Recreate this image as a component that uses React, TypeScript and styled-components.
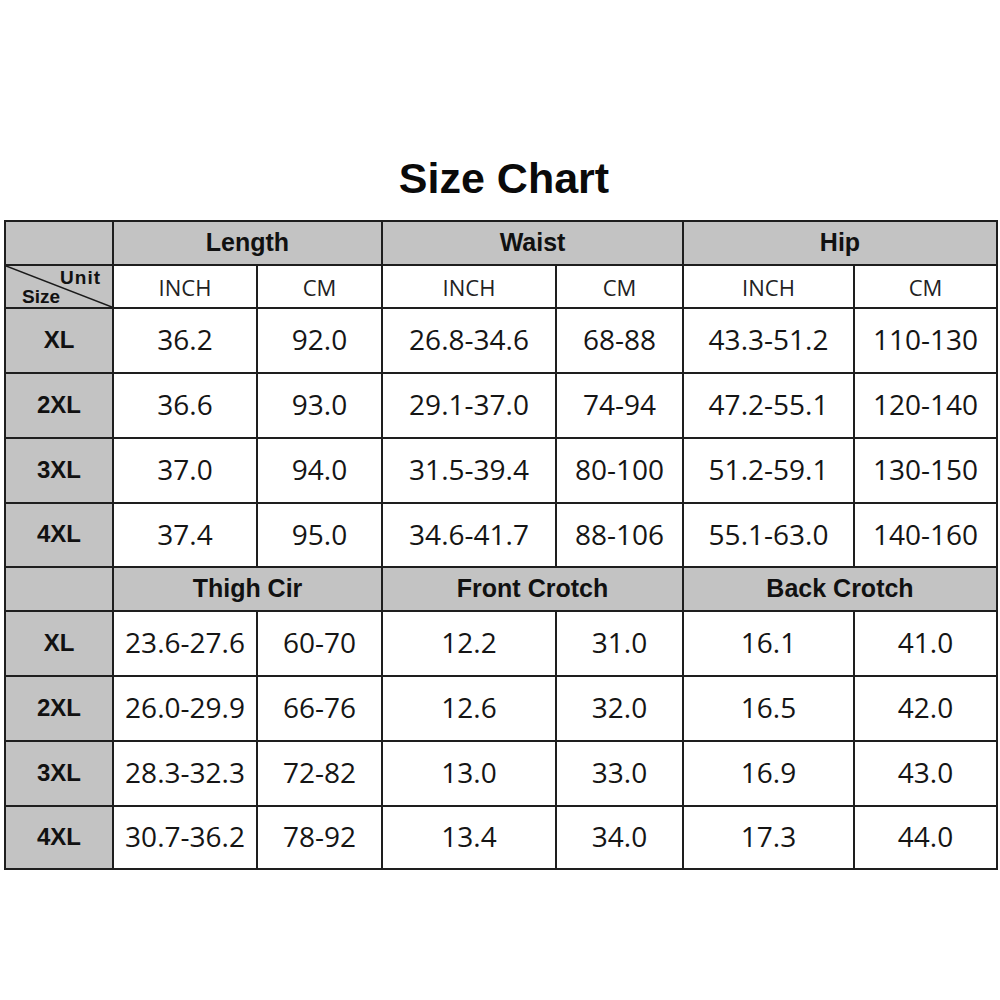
import React from "react";
import styled, { createGlobalStyle } from "styled-components";

const Global = createGlobalStyle`
  html, body { margin: 0; padding: 0; background: #ffffff; }
  body { width: 1000px; height: 1000px; overflow: hidden; }
`;

const Page = styled.div`
  width: 1000px;
  height: 1000px;
  box-sizing: border-box;
  padding: 153px 0 0 4px;
  display: flex;
  flex-direction: column;
  align-items: flex-start;
`;

const Title = styled.h1`
  margin: 0 0 17px 0;
  width: 996px;
  text-align: center;
  font-family: "Liberation Sans", Arial, sans-serif;
  font-weight: 700;
  font-size: 43px;
  line-height: 50px;
  color: #0a0a0a;
  padding-left: 4px;
  box-sizing: border-box;
`;

const Grid = styled.div`
  display: grid;
  grid-template-columns: 108px 144px 125px 174px 127px 171px 143px;
  grid-template-rows: 44px 43px 65px 65px 65px 64px 44px 65px 65px 65px 63px;
  border-top: 2px solid #1e1e1e;
  border-left: 2px solid #1e1e1e;
`;

const Cell = styled.div<{ $gray?: boolean; $span?: number }>`
  box-sizing: border-box;
  grid-column: span ${(p) => p.$span ?? 1};
  border: 2px solid #1e1e1e;
  background: ${(p) => (p.$gray ? "#c3c3c3" : "#ffffff")};
  display: flex;
  align-items: center;
  justify-content: center;
  margin-top: -2px;
  margin-left: -2px;
  width: calc(100% + 2px);
  height: calc(100% + 2px);
`;

const GroupHead = styled(Cell)`
  font-family: "Liberation Sans", Arial, sans-serif;
  font-weight: 700;
  font-size: 25px;
  color: #111;
  padding-bottom: 1px;
`;

const UnitHead = styled(Cell)`
  font-family: "Open Sans", "Liberation Sans", sans-serif;
  font-weight: 400;
  font-size: 22px;
  color: #222;
`;

const SizeLabel = styled(Cell)`
  font-family: "Liberation Sans", Arial, sans-serif;
  font-weight: 700;
  font-size: 24px;
  color: #111;
  padding-bottom: 2px;
`;

const Value = styled(Cell)`
  font-family: "Open Sans", "Liberation Sans", sans-serif;
  font-weight: 400;
  font-size: 28px;
  color: #151515;
  padding-bottom: 3px;
`;

const Corner = styled(Cell)`
  position: relative;
  display: block;
  font-family: "Liberation Sans", Arial, sans-serif;
  font-weight: 700;
  font-size: 19px;
  color: #111;
`;

const Diagonal = styled.svg`
  position: absolute;
  inset: 0;
  width: 100%;
  height: 100%;
`;

const UnitText = styled.span`
  position: absolute;
  right: 11px;
  top: 1px;
  letter-spacing: 1px;
`;

const SizeText = styled.span`
  position: absolute;
  left: 16px;
  bottom: -1px;
`;

type Row = { size: string; values: string[] };

const top: Row[] = [
  { size: "XL", values: ["36.2", "92.0", "26.8-34.6", "68-88", "43.3-51.2", "110-130"] },
  { size: "2XL", values: ["36.6", "93.0", "29.1-37.0", "74-94", "47.2-55.1", "120-140"] },
  { size: "3XL", values: ["37.0", "94.0", "31.5-39.4", "80-100", "51.2-59.1", "130-150"] },
  { size: "4XL", values: ["37.4", "95.0", "34.6-41.7", "88-106", "55.1-63.0", "140-160"] },
];

const bottom: Row[] = [
  { size: "XL", values: ["23.6-27.6", "60-70", "12.2", "31.0", "16.1", "41.0"] },
  { size: "2XL", values: ["26.0-29.9", "66-76", "12.6", "32.0", "16.5", "42.0"] },
  { size: "3XL", values: ["28.3-32.3", "72-82", "13.0", "33.0", "16.9", "43.0"] },
  { size: "4XL", values: ["30.7-36.2", "78-92", "13.4", "34.0", "17.3", "44.0"] },
];

const renderRows = (rows: Row[], key: string) =>
  rows.flatMap((r, i) => [
    <SizeLabel $gray key={`${key}-${i}-s`}>{r.size}</SizeLabel>,
    ...r.values.map((v, j) => <Value key={`${key}-${i}-${j}`}>{v}</Value>),
  ]);

export default function App() {
  return (
    <>
      <Global />
      <Page>
        <Title>Size Chart</Title>
        <Grid>
          <GroupHead $gray />
          <GroupHead $gray $span={2}>Length</GroupHead>
          <GroupHead $gray $span={2}>Waist</GroupHead>
          <GroupHead $gray $span={2}>Hip</GroupHead>

          <Corner $gray>
            <Diagonal viewBox="0 0 100 100" preserveAspectRatio="none">
              <line x1="0" y1="0" x2="100" y2="100" stroke="#1a1a1a" strokeWidth="1.6" vectorEffect="non-scaling-stroke" />
            </Diagonal>
            <UnitText>Unit</UnitText>
            <SizeText>Size</SizeText>
          </Corner>
          <UnitHead>INCH</UnitHead>
          <UnitHead>CM</UnitHead>
          <UnitHead>INCH</UnitHead>
          <UnitHead>CM</UnitHead>
          <UnitHead>INCH</UnitHead>
          <UnitHead>CM</UnitHead>

          {renderRows(top, "t")}

          <GroupHead $gray />
          <GroupHead $gray $span={2}>Thigh Cir</GroupHead>
          <GroupHead $gray $span={2}>Front Crotch</GroupHead>
          <GroupHead $gray $span={2}>Back Crotch</GroupHead>

          {renderRows(bottom, "b")}
        </Grid>
      </Page>
    </>
  );
}
